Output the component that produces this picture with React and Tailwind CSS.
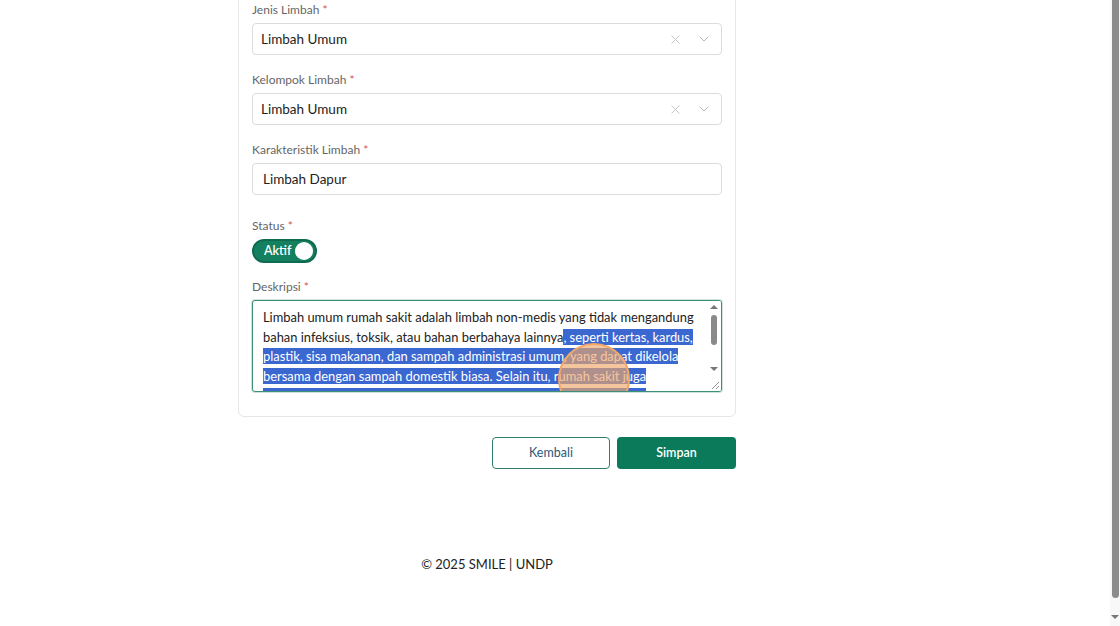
import { X, ChevronDown } from 'lucide-react'

function Label({ children, className = '' }) {
  return (
    <div className={`text-[12px] leading-[18px] text-[#666] ${className}`}>
      {children} <span className="text-[#d9534f]">*</span>
    </div>
  )
}

function SelectBox({ value }) {
  return (
    <div className="mt-[4px] flex h-[32px] items-center rounded-[4px] border border-[#dcdcdc] bg-white pl-[8px] pr-[8px]">
      <span className="flex-1 text-[13.5px] text-[#222]">{value}</span>
      <X className="mr-[13px] h-[15px] w-[15px] text-[#c4c4c4]" strokeWidth={1.5} />
      <ChevronDown className="mr-[1px] h-[16px] w-[16px] text-[#b5b5b5]" strokeWidth={1.5} />
    </div>
  )
}

export default function App() {
  return (
    <div className="flex h-screen w-full overflow-hidden bg-white font-['Lato','Liberation_Sans',sans-serif]">
      <div className="flex-1">
        <div className="ml-[238px] w-[498px]">
          <div className="mt-[-20px] rounded-[6px] border border-[#e6e6e6] bg-white px-[13px] pb-[24px] pt-[20px]">
            <Label>Jenis Limbah</Label>
            <SelectBox value="Limbah Umum" />

            <Label className="mt-[16px]">Kelompok Limbah</Label>
            <SelectBox value="Limbah Umum" />

            <Label className="mt-[16px]">Karakteristik Limbah</Label>
            <div className="mt-[4px] flex h-[32px] items-center rounded-[4px] border border-[#dcdcdc] bg-white px-[10px]">
              <span className="text-[13.5px] text-[#222]">Limbah Dapur</span>
            </div>

            <Label className="mt-[22px]">Status</Label>
            <div className="mt-[4px] flex h-[24px] w-[65px] items-center justify-between rounded-full border-2 border-[#0e6b50] bg-[#13805f] pl-[10px] pr-[2px]">
              <span className="text-[12.5px] font-semibold text-white">Aktif</span>
              <span className="h-[18px] w-[18px] rounded-full bg-white" />
            </div>

            <Label className="mt-[15px]">Deskripsi</Label>
            <div className="relative mt-[4px] h-[92px] overflow-hidden rounded-[3px] border border-[#3f8f78] bg-white shadow-[0_0_0_1px_rgba(63,143,120,0.25)]">
              <div className="pl-[10px] pr-[22px] pt-[7px] text-[12.9px] leading-[19.7px] text-[#222]">
                Limbah umum rumah sakit adalah limbah non-medis yang tidak mengandung bahan infeksius, toksik, atau bahan berbahaya lainnya
                <span className="bg-[#3b67d1] text-white">
                  , seperti kertas, kardus, plastik, sisa makanan, dan sampah administrasi umum, yang dapat dikelola bersama dengan sampah domestik biasa. Selain itu, rumah sakit juga menghasilkan limbah dapur dari instalasi gizi yang berupa sisa bahan makanan.
                </span>
              </div>
              <div className="absolute right-0 top-0 flex h-full w-[14px] flex-col items-center bg-white">
                <div className="mt-[4px] h-0 w-0 border-x-[4px] border-b-[4px] border-x-transparent border-b-[#777]" />
                <div className="mt-[6px] h-[30px] w-[6px] rounded-full bg-[#8a8a8a]" />
                <div className="mt-[22px] h-0 w-0 border-x-[4px] border-t-[4px] border-x-transparent border-t-[#777]" />
              </div>
              <svg className="absolute bottom-[1px] right-[1px]" width="12" height="12" viewBox="0 0 12 12">
                <rect width="12" height="12" fill="#fff" />
                <path d="M11 4 L4 11 M11 8 L8 11" stroke="#999" strokeWidth="1" />
              </svg>
              <div className="absolute left-[305px] top-[42px] h-[72px] w-[72px] rounded-full border-2 border-[#f2a766] bg-[rgba(240,166,104,0.65)]" />
            </div>
          </div>

          <div className="mt-[20px] flex justify-end gap-[7px]">
            <button className="h-[32px] w-[118px] rounded-[4px] border border-[#2f7e6c] bg-white text-[12.5px] text-[#2e5876]">
              Kembali
            </button>
            <button className="h-[32px] w-[119px] rounded-[4px] bg-[#0b7a5a] text-[12.5px] font-semibold text-white">
              Simpan
            </button>
          </div>

          <div className="mt-[86px] text-center text-[13px] text-[#222]">© 2025 SMILE | UNDP</div>
        </div>
      </div>
      <div className="flex w-[10px] flex-col items-center bg-[#f8f8f8]">
        <div className="h-[598px] w-[7px] rounded-b-full bg-[#8c8c8c]" />
        <div className="mt-[17px] h-0 w-0 border-x-[4px] border-t-[4px] border-x-transparent border-t-[#777]" />
      </div>
    </div>
  )
}
